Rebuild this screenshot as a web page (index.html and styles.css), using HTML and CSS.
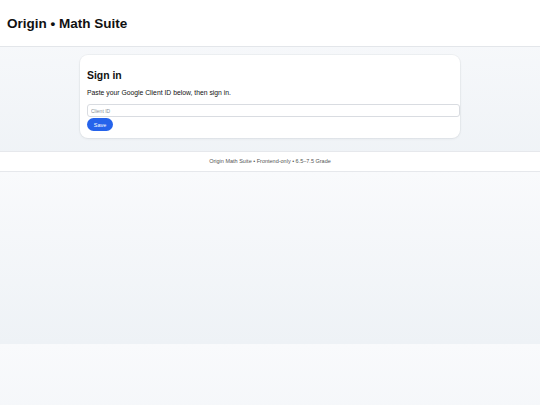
FILE: index.html
```html
<!DOCTYPE html>
<html lang="en">
<head>
<meta charset="utf-8">
<title>Origin • Math Suite</title>
<link rel="stylesheet" href="styles.css">
</head>
<body>
<header class="topbar">
  <h1 class="brand">Origin • Math Suite</h1>
</header>
<main class="main">
  <section class="card">
    <h2 class="card-title">Sign in</h2>
    <p class="card-text">Paste your Google Client ID below, then sign in.</p>
    <input class="field" type="text" placeholder="Client ID">
    <button class="btn" type="button">Save</button>
  </section>
</main>
<footer class="footer">Origin Math Suite • Frontend-only • 6.5–7.5 Grade</footer>
</body>
</html>
```

FILE: styles.css
```css
html {
  background: linear-gradient(180deg, #f9fafc 0%, #eef2f6 100%) 0 0 / 100% 172px repeat;
}
body {
  margin: 0;
  font-family: "Liberation Sans", Arial, sans-serif;
  color: #111;
}
.topbar {
  background: #fff;
  border-bottom: 1px solid #e3e6ea;
  height: 46px;
  display: flex;
  align-items: center;
  padding: 0 7px;
}
.brand {
  margin: 0;
  font-size: 13.5px;
  font-weight: 700;
  color: #111;
}
.main {
  padding: 8px 0 13px;
}
.card {
  width: 366px;
  margin: 0 auto;
  background: #fff;
  border-radius: 8px;
  padding: 7px;
  box-shadow: 0 1px 3px rgba(15, 23, 42, 0.06), 0 0 0 1px rgba(15, 23, 42, 0.03);
}
.card-title {
  margin: 8px 0 7px;
  font-size: 10.4px;
  font-weight: 700;
  line-height: 12px;
}
.card-text {
  margin: 0 0 7px;
  font-size: 6.8px;
  line-height: 8px;
}
.field {
  display: block;
  box-sizing: border-box;
  width: calc(100% + 7px);
  height: 13px;
  margin: 0;
  padding: 0 3px;
  border: 1px solid #d9dce1;
  border-radius: 3px;
  font: 5px "Liberation Sans", Arial, sans-serif;
  color: #111;
  background: #fff;
}
.field::placeholder {
  color: #8a8f97;
}
.btn {
  display: block;
  margin: 1px 0 0;
  height: 13px;
  width: 26px;
  padding: 0;
  border: 0;
  border-radius: 7px;
  background: #2563eb;
  color: #fff;
  font: 5.5px "Liberation Sans", Arial, sans-serif;
}
.footer {
  background: #fff;
  border-top: 1px solid #e6e8ec;
  border-bottom: 1px solid #e6e8ec;
  height: 19px;
  line-height: 19px;
  text-align: center;
  font-size: 5.5px;
  color: #555;
}
```
